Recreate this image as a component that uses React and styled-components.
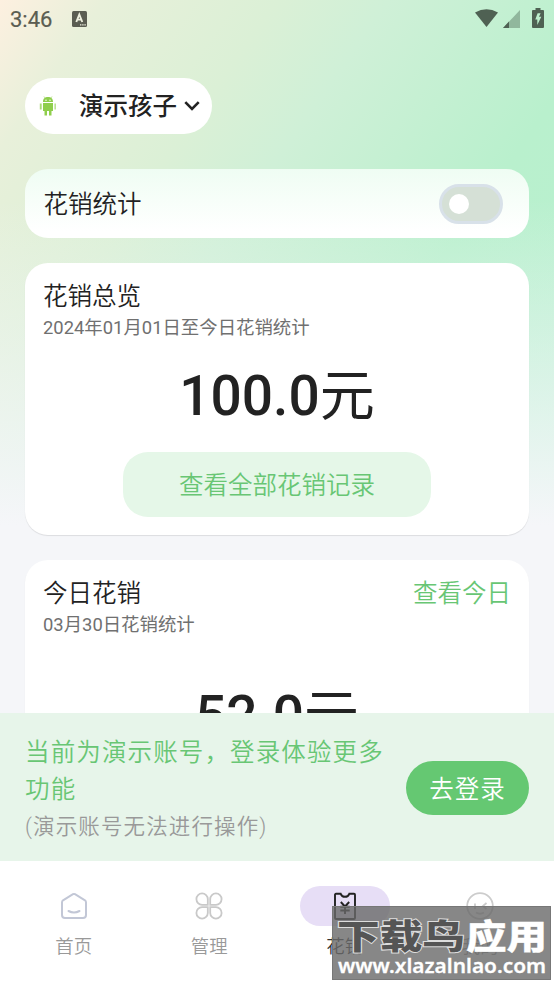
import React from "react";
import styled, { createGlobalStyle } from "styled-components";

const Global = createGlobalStyle`
  * { box-sizing: border-box; }
  body { margin: 0; overflow: hidden; font-family: Roboto, "Noto Sans CJK SC", sans-serif; color: #222; }
`;

const Screen = styled.div`
  position: relative;
  display: flex;
  flex-direction: column;
  width: 554px;
  height: 984px;
  overflow: hidden;
  background:
    linear-gradient(180deg, rgba(245,246,249,0) 0, rgba(245,246,249,0) 200px, #f5f6f9 525px),
    linear-gradient(125deg, #fdf0e0 0, #e8f0da 86px, #dbf0d6 227px, #cff0d7 320px, #b9f0cd 510px, #b6f1d6 100%);
`;
const StatusBar = styled.header`
  display: flex;
  align-items: center;
  height: 38px;
  padding: 0 9px 0 10px;
  color: #5b5d52;
  svg { display: block; }
`;
const Clock = styled.span`
  width: 62px;
  padding-top: 2px;
  font-size: 22px;
  font-weight: 400;
  -webkit-text-stroke: 0.2px #5b5d52;
  line-height: 38px;
`;
const StatusIcons = styled.div`
  margin-left: auto;
`;
const Content = styled.main`
  height: 675px;
  padding: 40px 25px 0;
  overflow: hidden;
`;
const ChildPicker = styled.button`
  display: flex;
  align-items: center;
  width: 187px;
  height: 56px;
  padding: 0 12px 0 14px;
  border: 0;
  border-radius: 28px;
  background: #fff;
  color: #222;
  font: 500 24.5px/36px Roboto, "Noto Sans CJK SC", sans-serif;
`;
const ChildName = styled.span`
  margin-left: 22px;
  padding-top: 2px;
  white-space: nowrap;
`;
const ToggleCard = styled.section`
  display: flex;
  align-items: center;
  justify-content: space-between;
  height: 69px;
  margin-top: 35px;
  padding: 0 26px 0 18.5px;
  border-radius: 23px;
  background: linear-gradient(#effdf3, #fff 90%);
`;
const Title = styled.h2`
  margin: 0;
  padding-top: 2px;
  font-size: 24.5px;
  font-weight: 350;
  line-height: 36px;
`;
const Switch = styled.button`
  width: 64px;
  height: 40px;
  padding: 0 0 0 6.5px;
  border: 3px solid #d8e1e9;
  border-radius: 20px;
  background: #d5e0d6;
`;
const Knob = styled.span`
  display: block;
  width: 20px;
  height: 20px;
  border-radius: 50%;
  background: #fff;
`;
const Card = styled.section`
  display: flex;
  flex-direction: column;
  height: ${(p) => p.$height}px;
  margin-top: 25px;
  padding: 14px 18px 0;
  border-radius: 23px;
  background: #fff;
  box-shadow: 0 1px 1px rgba(0,0,0,.1);
`;
const TitleRow = styled.div`
  display: flex;
  justify-content: space-between;
`;
const TextLink = styled.a`
  padding-top: 2px;
  color: #68c674;
  font-size: 24.5px;
  font-weight: 350;
  line-height: 36px;
`;
const Period = styled.p`
  margin: 0;
  color: #707070;
  font-size: 18.4px;
  font-weight: 400;
  line-height: 25px;
  height: 26px;
`;
const Amount = styled.div`
  margin-top: ${(p) => p.$gap}px;
  font-size: 55px;
  font-weight: 500;
  line-height: 80px;
  text-align: center;
`;
const Unit = styled.span`
  font-weight: 400;
`;
const RecordsButton = styled.button`
  align-self: center;
  width: 308px;
  height: 65px;
  margin-top: 16px;
  padding: 3px 0 0;
  border: 0;
  border-radius: 25px;
  background: #e5f7e8;
  color: #68c674;
  font: 350 24.5px/36px Roboto, "Noto Sans CJK SC", sans-serif;
`;
const LoginBanner = styled.aside`
  display: flex;
  align-items: center;
  justify-content: space-between;
  height: 148px;
  padding: 0 25px;
  background: #e7f5ea;
`;
const BannerText = styled.div`
  width: 365px;
  padding-top: 5px;
  color: #68c674;
  font-size: 24.5px;
  font-weight: 350;
  letter-spacing: 1.13px;
  line-height: 37px;
`;
const Hint = styled.div`
  color: #999;
  font-size: 21.5px;
`;
const LoginButton = styled.button`
  width: 123px;
  height: 54px;
  margin-top: 1px;
  padding: 5px 0 0;
  border: 0;
  border-radius: 27px;
  background: #65c872;
  color: #fff;
  font: 350 24.5px/36px Roboto, "Noto Sans CJK SC", sans-serif;
  letter-spacing: 1px;
`;
const NavBar = styled.nav`
  display: grid;
  grid-template-columns: repeat(4, 1fr);
  height: 123px;
  padding: 25px 6px 0;
  background: #fff;
`;
const NavItem = styled.div`
  display: flex;
  flex-direction: column;
  align-items: center;
  color: ${(p) => (p.$active ? "#333" : "#999")};
  font-size: 18.4px;
  font-weight: 350;
  line-height: 28px;
`;
const NavIcon = styled.span`
  display: flex;
  align-items: center;
  justify-content: center;
  width: 90px;
  height: 40px;
  margin-bottom: 7px;
  border-radius: 20px;
  background: ${(p) => (p.$active ? "#e7def6" : "transparent")};
`;
const Watermark = styled.div`
  position: absolute;
  left: 332px;
  top: 906px;
  width: 219px;
  height: 74px;
  background: rgba(105,105,105,.8);
  border: 1px solid #777;
  svg { display: block; }
`;
const MarkText = styled.text`
  font-family: ${(p) => (p.$latin ? '"Noto Sans"' : '"Noto Sans CJK SC"')}, sans-serif;
  font-weight: ${(p) => (p.$latin ? 600 : 900)};
  font-size: ${(p) => (p.$latin ? 20 : 34)}px;
  fill: ${(p) => p.$fill};
  stroke: ${(p) => p.$stroke};
  stroke-width: ${(p) => (p.$latin ? 0.3 : p.$thin ? 0.3 : 2)}px;
  paint-order: stroke;
`;
const Chevron = styled.svg`
  margin-left: auto;
`;

const KeyboardIcon = () => (
  <svg width="15" height="16" viewBox="0 0 15 16">
    <rect width="15" height="16" rx="1.5" fill="#5b5d52" />
    <path d="M4.3 11 7.3 3.5 10.3 11M5.4 8.6h3.8" fill="none" stroke="#eef0df" strokeWidth="1.9" />
    <path d="M8 13.8h1.4M10.2 13.8h1.4M12.4 13.8h1.4" stroke="#eef0df" strokeWidth="1.2" />
  </svg>
);
const SignalIcons = () => (
  <svg width="70" height="22" viewBox="0 0 70 22">
    <path d="M0 4.5Q11.5-2.2 23 4.5L11.5 19Z" fill="#4f6153" />
    <path d="M28 20 45 2v18Z" fill="#91b79d" />
    <path d="m28 20 6-6.5V20Z" fill="#4f6153" />
    <path d="M58 2h2.5V0h5v2H68q1 0 1 1v16q0 1-1 1H58q-1 0-1-1V3q0-1 1-1Z" fill="#4f6153" />
    <path d="m62.6 5.2-2.3 6.3h2v5.5l4-8.2h-2.3l1.6-3.6Z" fill="#bdf0cd" />
  </svg>
);
const AndroidIcon = () => (
  <svg width="18" height="20" viewBox="0 0 18 20" fill="#8fce4c">
    <path d="M4 6C4 2.4 6 1 9 1s5 1.4 5 5ZM4 7h10v8H4ZM5.5 14H8v5.5H5.5ZM10 14h2.5v5.5H10Z" />
    <path d="M0.8 7.5h1.9v6H.8ZM15.5 7.5h1.3v6h-1.3Z" opacity=".75" />
    <path d="m5 .5 1.5 2M13 .5l-1.5 2" stroke="#8fce4c" strokeWidth=".6" />
    <circle cx="7" cy="4.3" r=".7" fill="#fff" /><circle cx="11" cy="4.3" r=".7" fill="#fff" />
  </svg>
);
const ChevronIcon = () => (
  <Chevron width="16" height="12" viewBox="0 0 16 12">
    <path d="m1.3 2.2 6.7 6.8 6.7-6.8" fill="none" stroke="#222" strokeWidth="2.6" />
  </Chevron>
);
const HomeIcon = () => (
  <svg width="28" height="28" viewBox="0 0 28 28" fill="none" stroke="#c2c7d6" strokeWidth="2" strokeLinecap="round" strokeLinejoin="round">
    <path d="M13 2.2Q14 1.6 15 2.2L25 8.3Q26 9 26 10.5V23Q26 26 23 26H5Q2 26 2 23V10.5Q2 9 3 8.3ZM8.5 19Q14 22 19.5 19" />
  </svg>
);
const GridIcon = () => (
  <svg width="28" height="28" viewBox="0 0 28 28" fill="none" stroke="#c9c9c9" strokeWidth="1.8">
    <path d="M12.8 12.8V7A5.7 5.7 0 1 0 7 12.8ZM15.2 12.8V7A5.7 5.7 0 1 1 21 12.8ZM12.8 15.2V21A5.7 5.7 0 1 1 7 15.2ZM15.2 15.2V21A5.7 5.7 0 1 0 21 15.2Z" />
  </svg>
);
const TicketIcon = () => (
  <svg width="24" height="28" viewBox="0 0 24 28" fill="none" stroke="#222" strokeWidth="1.9">
    <path d="M3 1.8h4.7Q8.8 4.8 12 4.8t4.3-3H21q1 0 1 1V26q0 1-1 1H3q-1 0-1-1V2.8q0-1 1-1ZM7.8 10l4.2 4.5 4.2-4.5M7.3 14.7h9.4M7.3 18.5h9.4M12 14.5v7.5" />
  </svg>
);
const FaceIcon = () => (
  <svg width="28" height="28" viewBox="0 0 28 28" fill="none" stroke="#ccc" strokeWidth="1.8">
    <circle cx="14" cy="14" r="12.8" />
    <path d="M9 11.5v5.5M20.5 11 17 14l3.5 3M10 20.5q4 2.5 8 0" />
  </svg>
);

const TABS = [
  { label: "首页", Icon: HomeIcon },
  { label: "管理", Icon: GridIcon },
  { label: "花销", Icon: TicketIcon, active: true },
  { label: "我的", Icon: FaceIcon },
];

export default function App() {
  return (
    <>
      <Global />
      <Screen>
        <StatusBar>
          <Clock>3:46</Clock>
          <KeyboardIcon />
          <StatusIcons><SignalIcons /></StatusIcons>
        </StatusBar>
        <Content>
          <ChildPicker>
            <AndroidIcon />
            <ChildName>演示孩子</ChildName>
            <ChevronIcon />
          </ChildPicker>
          <ToggleCard>
            <Title>花销统计</Title>
            <Switch role="switch" aria-checked="false"><Knob /></Switch>
          </ToggleCard>
          <Card $height={272}>
            <Title>花销总览</Title>
            <Period>2024年01月01日至今日花销统计</Period>
            <Amount $gap={15}>100.0<Unit>元</Unit></Amount>
            <RecordsButton>查看全部花销记录</RecordsButton>
          </Card>
          <Card $height={300}>
            <TitleRow>
              <Title>今日花销</Title>
              <TextLink>查看今日</TextLink>
            </TitleRow>
            <Period>03月30日花销统计</Period>
            <Amount $gap={38}>52.0<Unit>元</Unit></Amount>
          </Card>
        </Content>
        <LoginBanner>
          <BannerText>
            当前为演示账号，登录体验更多功能
            <Hint>(演示账号无法进行操作)</Hint>
          </BannerText>
          <LoginButton>去登录</LoginButton>
        </LoginBanner>
        <NavBar>
          {TABS.map(({ label, Icon, active }) => (
            <NavItem key={label} $active={active}>
              <NavIcon $active={active}><Icon /></NavIcon>
              {label}
            </NavItem>
          ))}
        </NavBar>
        <Watermark>
          <svg width="217" height="72" viewBox="0 0 217 72">
            <MarkText x="4" y="42" textLength="128" lengthAdjust="spacingAndGlyphs" $fill="#555" $stroke="#ddd">下载鸟</MarkText>
            <MarkText x="133" y="42" textLength="81" lengthAdjust="spacingAndGlyphs" $thin $fill="#fff" $stroke="#fff">应用</MarkText>
            <MarkText x="5" y="66" textLength="208" lengthAdjust="spacingAndGlyphs" $latin $fill="#fff" $stroke="#fff">www.xlazalnlao.com</MarkText>
          </svg>
        </Watermark>
      </Screen>
    </>
  );
}
